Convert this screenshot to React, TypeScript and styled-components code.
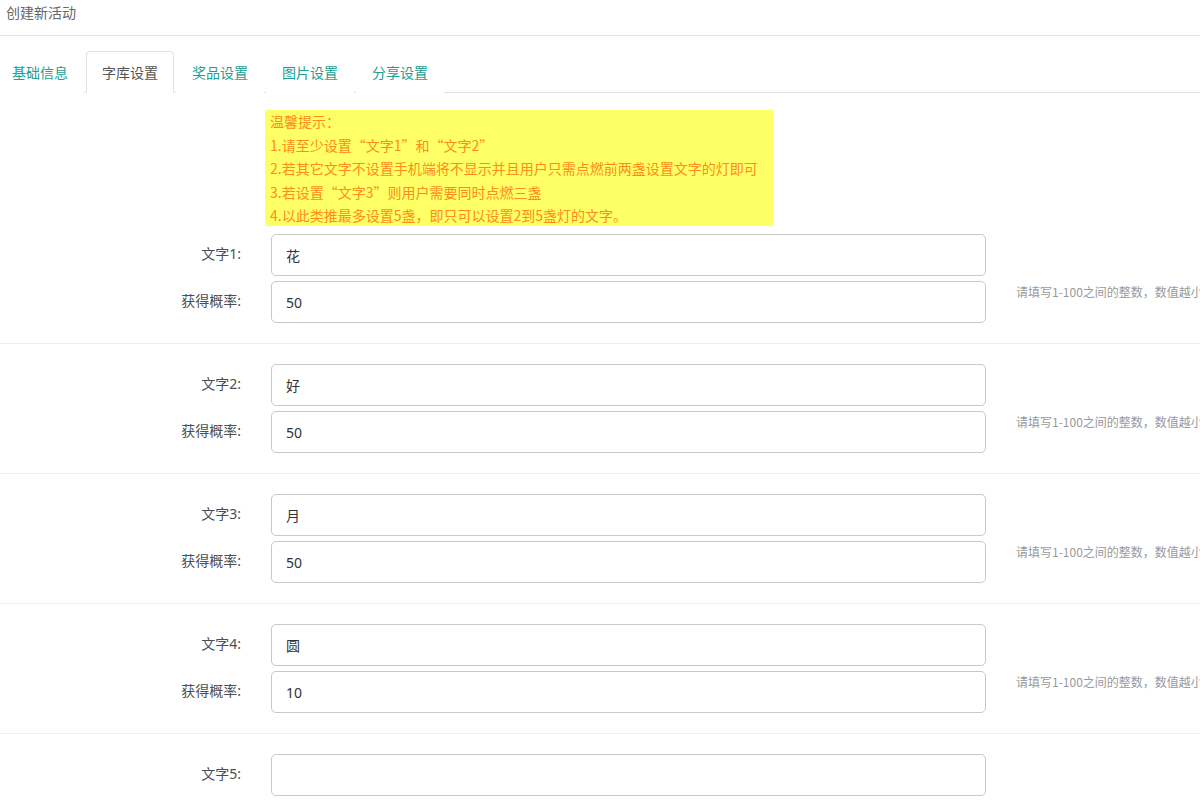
import React from "react";
import styled, { createGlobalStyle } from "styled-components";

const TABS = ["基础信息", "字库设置", "奖品设置", "图片设置", "分享设置"];
const ACTIVE_TAB = 1;

const TIPS = [
  "温馨提示：",
  "1.请至少设置“文字1”和“文字2”",
  "2.若其它文字不设置手机端将不显示并且用户只需点燃前两盏设置文字的灯即可",
  "3.若设置“文字3”则用户需要同时点燃三盏",
  "4.以此类推最多设置5盏，即只可以设置2到5盏灯的文字。",
];

const WORDS = [
  { word: "花", rate: "50" },
  { word: "好", rate: "50" },
  { word: "月", rate: "50" },
  { word: "圆", rate: "10" },
  { word: "", rate: "" },
];

const CJK = `"Noto Sans CJK SC", "Noto Sans", sans-serif`;

const App = () => {
  return (
    <>
      <GlobalStyle />
      <StyledPage>
        <StyledTitle>创建新活动</StyledTitle>
        <StyledTabs>
          {TABS.map((tab, i) => (
            <StyledTab key={tab} $active={i === ACTIVE_TAB}>
              {tab}
            </StyledTab>
          ))}
        </StyledTabs>
        <StyledTips>
          {TIPS.map((line) => (
            <div key={line}>{line}</div>
          ))}
        </StyledTips>
        {WORDS.map((item, i) => (
          <StyledSection key={i} $first={i === 0}>
            <StyledLabel>文字{i + 1}:</StyledLabel>
            <StyledInput defaultValue={item.word} />
            <span />
            <StyledLabel>获得概率:</StyledLabel>
            <StyledInput defaultValue={item.rate} />
            <StyledHint>请填写1-100之间的整数，数值越小概率越低</StyledHint>
          </StyledSection>
        ))}
      </StyledPage>
    </>
  );
};

const GlobalStyle = createGlobalStyle`
  html, body {
    margin: 0;
    padding: 0;
    background: #fff;
    overflow-x: hidden;
  }
  body {
    font-family: "Noto Sans", "Noto Sans CJK SC", sans-serif;
    font-size: 14px;
    color: #333;
  }
`;

const StyledPage = styled.div`
  width: 1200px;
  overflow: hidden;
`;

const StyledTitle = styled.div`
  height: 36px;
  box-sizing: border-box;
  padding: 3px 6px 0;
  line-height: 20px;
  font-size: 14px;
  color: #666;
  border-bottom: 1px solid #e5e5e5;
`;

const StyledTabs = styled.ul`
  display: flex;
  list-style: none;
  margin: 15px 0 0;
  padding: 0;
  border-bottom: 1px solid #e2e2e2;
  height: 41px;
`;

const StyledTab = styled.li<{ $active: boolean }>`
  box-sizing: border-box;
  height: 42px;
  line-height: 42px;
  padding: 0 15px;
  margin-right: 2px;
  font-size: 14px;
  color: ${(p) => (p.$active ? "#555" : "#1aa094")};
  background: #fff;
  border: 1px solid ${(p) => (p.$active ? "#e2e2e2" : "transparent")};
  border-bottom-color: ${(p) => (p.$active ? "#fff" : "transparent")};
  border-radius: 4px 4px 0 0;

  &:first-child {
    padding-left: 11px;
  }
`;

const StyledTips = styled.div`
  margin: 17px 0 0 265px;
  width: 508px;
  height: 116px;
  box-sizing: border-box;
  padding: 0 5px;
  background: #ffff66;
  color: #ff8c1a;
  font-family: ${CJK};
  font-size: 14px;
  line-height: 23.5px;
`;

const StyledSection = styled.div<{ $first: boolean }>`
  display: grid;
  grid-template-columns: 241px 715px 1fr;
  column-gap: 30px;
  row-gap: 5px;
  padding: ${(p) => (p.$first ? "8px" : "20px")} 0 20px;
  border-bottom: 1px solid #eee;
`;

const StyledLabel = styled.label`
  text-align: right;
  font-size: 14px;
  color: #4a4f55;
  line-height: 40px;
`;

const StyledInput = styled.input`
  box-sizing: border-box;
  height: 42px;
  width: 100%;
  margin: 0;
  padding: 0 14px;
  border: 1px solid #c8c8c8;
  border-radius: 5px;
  font-family: "Noto Sans", "Noto Sans CJK SC", sans-serif;
  font-size: 14px;
  color: #333;
  outline: none;
`;

const StyledHint = styled.span`
  align-self: start;
  margin-top: 2px;
  line-height: 18px;
  font-family: ${CJK};
  font-size: 12px;
  color: #999;
  white-space: nowrap;
`;

export default App;
